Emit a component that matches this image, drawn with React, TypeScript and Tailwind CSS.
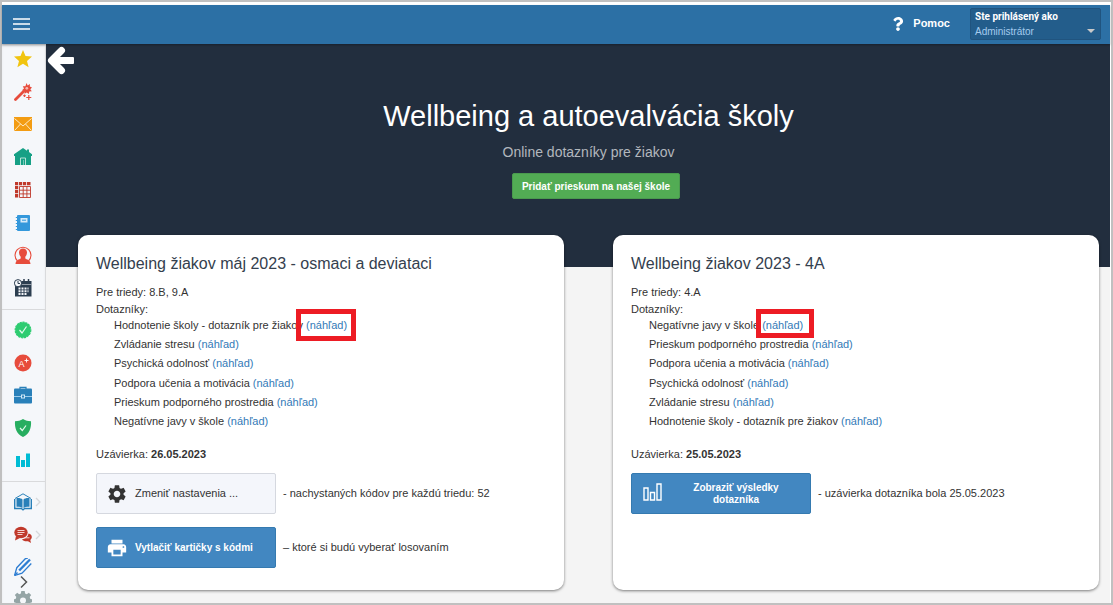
import { ReactNode } from 'react';
import clsx from 'clsx';
import { FaQuestion } from 'react-icons/fa';
import { MdPrint, MdSettings } from 'react-icons/md';

interface ISurvey {
    title: string;
    classes: string;
    deadline: string;
    forms: string[];
    markClass: string;
}

const surveys: ISurvey[] = [
    {
        title: 'Wellbeing žiakov máj 2023 - osmaci a deviataci',
        classes: '8.B, 9.A',
        deadline: '26.05.2023',
        markClass: '-left-2.5 w-[60px] h-8',
        forms: [
            'Hodnotenie školy - dotazník pre žiakov',
            'Zvládanie stresu',
            'Psychická odolnosť',
            'Podpora učenia a motivácia',
            'Prieskum podporného prostredia',
            'Negatívne javy v škole',
        ],
    },
    {
        title: 'Wellbeing žiakov 2023 - 4A',
        classes: '4.A',
        deadline: '25.05.2023',
        markClass: '-left-1.5 w-[58px] h-[29px]',
        forms: [
            'Negatívne javy v škole',
            'Prieskum podporného prostredia',
            'Podpora učenia a motivácia',
            'Psychická odolnosť',
            'Zvládanie stresu',
            'Hodnotenie školy - dotazník pre žiakov',
        ],
    },
];

const Icon = ({ children }: { children: ReactNode }) => (
    <svg viewBox="0 0 18 18" className="size-[18px] shrink-0" fill="none" aria-hidden="true">
        {children}
    </svg>
);

const MenuItem = ({ label, arrow, children }: { label: string; arrow?: boolean; children: ReactNode }) => (
    <a href="#" aria-label={label} className="relative flex h-[18px] pl-3">
        <Icon>{children}</Icon>
        {arrow && (
            <svg viewBox="0 0 6 10" className="absolute right-1 top-1 h-2.5 w-1.5" fill="none" aria-hidden="true">
                <path d="M1 1l4 4-4 4" stroke="#d5d8db" strokeWidth="1.3" />
            </svg>
        )}
    </a>
);

const Sidebar = () => (
    <nav className="relative w-11 shrink-0 overflow-hidden border-r border-[#d9dadc] bg-[#f5f7fa] shadow-[inset_0_3px_3px_-1px_rgba(0,0,0,0.12)]">
        <div className="flex h-[266px] flex-col justify-between border-b border-[#d9dadc] pb-3 pt-1.5">
            <MenuItem label="Obľúbené">
                <path fill="#f1c40f" d="M9 0l2.500 6.100 6.500.5-5 4.300 1.600 6.400L9 13.800l-5.600 3.500L5 10.900 0 6.600l6.500-.5z" />
            </MenuItem>
            <MenuItem label="Sprievodca">
                <path d="M1.500 16.500L9.500 8.500" stroke="#e74c3c" strokeWidth="2.800" strokeLinecap="round" />
                <path fill="#e74c3c" d="M12.500 0l1.200 2.400L16 1l-.2 2.600 2.200.8-1.700 1.800 1.500 2-2.500.2-.5 2.500-2-1.500-2.200 1.300-.1-2.600L8 7.200l2-1.700-1.200-2.300 2.600.1z" />
                <circle cx="12.800" cy="5.300" r="1.400" fill="#f7b7b0" />
                <path d="M14.800 12v5M12.300 14.500h5M10.500 11.500v2.400M9.300 12.700h2.400" stroke="#e74c3c" strokeWidth="1.200" />
            </MenuItem>
            <MenuItem label="Správy">
                <path fill="#f39c12" d="M0 2h18v14H0z" />
                <path d="M.5 3.500L9 11l8.500-7.500M.5 15.500l6-6.500M17.500 15.500l-6-6.500" stroke="#fde9c6" />
            </MenuItem>
            <MenuItem label="Škola">
                <path fill="#16a085" d="M9 0L0 6.300V8h1v9h16V8h1V6.300L15 4V1.500h-2v1.300z" />
                <path d="M6.500 17V10h5v7" stroke="#b5e3d6" />
                <path d="M9.500 12v5" stroke="#b5e3d6" strokeOpacity=".6" />
            </MenuItem>
            <MenuItem label="Rozvrh">
                <path fill="#c0392b" d="M1 1h3.200v3.200H1zM5 1h3.200v3.200H5zM9 1h3.200v3.200H9zM13 1h3.500v3.200H13zM1 5h3.200v3.200H1zM1 9h3.200v3.200H1zM1 13h3.200v3.500H1z" />
                <path d="M5.500 5.500h11v11h-11zM9.200 5.500v11M12.900 5.500v11M5.500 9.200h11M5.500 12.900h11" stroke="#c0392b" strokeWidth=".9" />
            </MenuItem>
            <MenuItem label="Triedna kniha">
                <rect x="3" y="1" width="13" height="16" rx="1" fill="#3498db" />
                <path d="M1.800 3.500h2m-2 3h2m-2 3h2m-2 3h2m-2 3h2" stroke="#3498db" />
                <path fill="#d7ebf8" d="M6.500 4h7v4.500h-7z" />
                <path d="M8 6.200h4" stroke="#3498db" />
            </MenuItem>
            <MenuItem label="Používatelia">
                <path d="M3.500 15A8 8 0 1 1 14.500 15" stroke="#e74c3c" strokeWidth="1.100" />
                <path fill="#e74c3c" d="M9 2.500c2.800 0 4.100 1.900 4 4.300-.1 1.700-.8 3-1.700 4v1.600c1 1 5.200 1.300 5.200 5.600h-15c0-4.300 4.200-4.600 5.200-5.600v-1.600c-.9-1-1.600-2.300-1.700-4-.1-2.400 1.200-4.300 4-4.300z" />
            </MenuItem>
            <MenuItem label="Kalendár">
                <path fill="#2c3e50" d="M1 2h16.500v15.500H1z" />
                <path d="M10 0v3M14.500 0v3" stroke="#2c3e50" strokeWidth="1.500" />
                <path d="M8 5.500h9.500" stroke="#aeb6bf" strokeWidth=".8" />
                <circle cx="4" cy="4.200" r="3.600" fill="#f5f7fa" stroke="#2c3e50" />
                <path d="M4 2v2.500h2" stroke="#2c3e50" />
                <path fill="#f5f7fa" d="M4.500 8.500h2v2h-2zM7.500 8.500h2v2h-2zM10.500 8.500h2v2h-2zM13.500 8.500h1v2h-1zM4.500 11.300h2v2h-2zM7.500 11.300h2v2h-2zM10.500 11.300h2v2h-2zM13.500 11.300h1v2h-1zM4.500 14h2v2h-2zM7.500 14h2v2h-2zM10.500 14h2v2h-2z" />
            </MenuItem>
        </div>
        <div className="flex h-[172px] flex-col justify-between border-b border-[#d9dadc] pb-3 pt-[11px]">
            <MenuItem label="Dochádzka">
                <circle cx="9" cy="9" r="7.800" fill="#2ecc71" stroke="#2ecc71" strokeWidth="1.200" strokeDasharray="2.200 .8" />
                <path d="M5.500 9l2.500 3 4.500-6.500" stroke="#e4faed" strokeWidth="1.200" />
            </MenuItem>
            <MenuItem label="Známky">
                <circle cx="9" cy="9" r="8.500" fill="#e74c3c" />
                <text x="4.500" y="13" fontSize="9" fill="#fff" fontFamily="Liberation Sans, sans-serif">A</text>
                <path d="M10.500 6.500h4M12.500 4.500v4" stroke="#fff" strokeWidth=".9" />
            </MenuItem>
            <MenuItem label="Agenda">
                <path d="M6 3V1.300h6V3" stroke="#2980b9" strokeWidth="1.200" />
                <rect y="2.500" width="18" height="15" rx="1" fill="#2980b9" />
                <path d="M0 10.500h18" stroke="#9ccbea" />
                <rect x="7.500" y="9" width="3" height="3" fill="#2980b9" stroke="#d0e7f6" />
            </MenuItem>
            <MenuItem label="Bezpečnosť">
                <path fill="#27ae60" d="M9 0c2.500 1.500 5 2.200 8 2.300C17.500 9 15.500 15 9 18 2.500 15 .5 9 1 2.300 4 2.200 6.500 1.500 9 0z" />
                <path d="M6 9l2.300 2.500 3.700-5" stroke="#e4faed" strokeWidth="1.200" />
            </MenuItem>
            <MenuItem label="Prieskumy">
                <path fill="#00bcd4" d="M2 5h4v11H2zM7 9h4v7H7zM12 2.500h4V16h-4z" />
            </MenuItem>
        </div>
        <div className="flex h-[127px] flex-col justify-between pt-[11px]">
            <MenuItem label="Knižnica" arrow>
                <path d="M1 5.500L9 .8l8 4.700" stroke="#2980b9" />
                <path fill="#2980b9" d="M2.500 5c2.700-.2 5 .3 6 1.500V15c-1.300-1-3.500-1.300-6-1.200zM15.500 5c-2.700-.2-5 .3-6 1.500V15c1.300-1 3.500-1.300 6-1.200z" />
                <path d="M.7 6v9.500h6.600L9 16.800l1.700-1.300h6.600V6" stroke="#2980b9" strokeWidth="1.400" />
            </MenuItem>
            <MenuItem label="Komunikácia" arrow>
                <ellipse cx="7" cy="6.500" rx="6.700" ry="5.700" fill="#c0392b" />
                <path fill="#c0392b" d="M2 10l-1 4.500L6 12z" />
                <path d="M3.500 4.500h7M3.500 6.500h7M3.500 8.500h5" stroke="#fbe3e0" strokeWidth=".9" />
                <path fill="#c0392b" d="M14.500 7.500c2.200.6 3.300 1.900 3.300 3.500 0 1.200-.5 2.100-1.500 2.900l.7 3.100-3-1.700c-3 .3-5-.5-6-2.100 3.500-.3 6-2.500 6.500-5.700z" />
                <path d="M11 11.800h4.500" stroke="#fbe3e0" strokeWidth=".9" />
            </MenuItem>
            <MenuItem label="Úlohy">
                <path d="M.5 17.500L2.800 9.700 11 1c.7-.7 1.800-.8 2.800-.5M.5 17.500l7.500-2.300L17.300 5.500" stroke="#2d7dd2" strokeWidth="1.300" />
                <path d="M5.200 12.500L16 1.500" stroke="#2d7dd2" strokeWidth="2.400" />
                <path d="M.5 17.500l3-3" stroke="#2d7dd2" strokeWidth="1.500" />
            </MenuItem>
            <MenuItem label="Nastavenia">
                <path fill="#95a5a6" fillRule="evenodd" d="M7.300 0h3.400l.4 2.500 1.700.7 2-1.500 2.400 2.400-1.500 2 .7 1.800 1.600.4v3l-1.600.4-.7 1.800 1.500 2-2.400 2.400-2-1.500-1.700.7-.4 2.500H7.300l-.4-2.500-1.700-.7-2 1.500L.8 15.500l1.500-2-.7-1.800L0 11.300v-3l1.600-.4.7-1.800-1.500-2 2.400-2.400 2 1.500 1.700-.7zM9 6.500a3 3 0 1 0 0 6 3 3 0 0 0 0-6z" />
            </MenuItem>
        </div>
        <button type="button" aria-label="Rozbaliť menu" className="absolute bottom-3.5 left-[18px]">
            <svg viewBox="0 0 8 14" className="block h-3.5 w-2" fill="none" aria-hidden="true">
                <path d="M1 1.500l5.500 5.500L1 12.500" stroke="#555" strokeWidth="1.500" />
            </svg>
        </button>
    </nav>
);

const Header = () => (
    <header className="z-10 flex h-[39px] shrink-0 items-center bg-[#2c70a5] pb-0.5 pl-[11px] pr-[9px] text-[11px] text-white shadow-[0_1px_2px_rgba(0,0,0,0.3)]">
        <button type="button" aria-label="Menu">
            <svg viewBox="0 0 17 12" className="h-3 w-[17px]" fill="none" aria-hidden="true">
                <path d="M0 1h17M0 6h17M0 11h17" stroke="#fff" strokeWidth="1.500" />
            </svg>
        </button>
        <a href="#" className="ml-auto flex items-center gap-2 font-bold">
            <FaQuestion className="size-3.5" />
            Pomoc
        </a>
        <button type="button" className="relative ml-5 h-8 w-[131px] rounded-xs border border-[#20547f] bg-[#235d8b] pl-1 text-left text-[10px] leading-[15px]">
            <span className="block font-['Roboto',sans-serif] font-bold">Ste prihlásený ako</span>
            <span className="block text-[#a5cbee]">Administrátor</span>
            <svg viewBox="0 0 8 4" className="absolute bottom-1.5 right-[5px] h-1 w-2" aria-hidden="true">
                <path d="M0 0h8L4 4z" fill="#c9c9c9" />
            </svg>
        </button>
    </header>
);

const SurveyCard = ({ survey, children }: { survey: ISurvey; children: ReactNode }) => (
    <article className="rounded-[10px] bg-white px-[18px] pb-[22px] pt-[19px] shadow-[0_1px_3px_rgba(0,0,0,0.5)]">
        <h2 className="text-base leading-5 text-[#34404e]">{survey.title}</h2>
        <p className="mt-2.5 leading-[17px]">Pre triedy: {survey.classes}</p>
        <p className="leading-[17px]">Dotazníky:</p>
        <ul className="flex h-[111px] flex-col justify-between pl-[18px] leading-[15px]">
            {survey.forms.map((form, index) => (
                <li key={form} className="whitespace-nowrap">
                    {form}{' '}
                    <a href="#" className="relative text-[#337ab7]">
                        (náhľad)
                        {index === 0 && (
                            <span className={clsx('absolute -top-2.5 border-[5px] border-[#ed1c24]', survey.markClass)} />
                        )}
                    </a>
                </li>
            ))}
        </ul>
        <p className="mt-[17px] leading-[17px]">
            Uzávierka: <strong>{survey.deadline}</strong>
        </p>
        <div className="mt-2.5 flex flex-col gap-[13px]">{children}</div>
    </article>
);

const App = () => {
    return (
        <div className="flex h-screen flex-col border-2 border-[#c0c0c0] bg-white pr-px pt-[3px] font-['Liberation_Sans',Arial,sans-serif] text-[11px] text-[#333]">
            <Header />
            <div className="flex min-h-0 flex-1">
                <Sidebar />
                <main className="min-w-0 flex-1 overflow-hidden bg-[#f4f4f4]">
                    <section className="relative h-[223px] bg-[#222e3e] pl-8 pr-[11px] pt-[54px] text-center">
                        <a href="#" aria-label="Späť" className="absolute left-px top-0.5">
                            <svg viewBox="0 0 27 29" className="h-[29px] w-[27px]" fill="none" aria-hidden="true">
                                <path d="M14.500 4.500l-10 10 10 10" stroke="#fff" strokeWidth="7" strokeLinecap="round" strokeLinejoin="round" />
                                <path d="M5 14.500h20" stroke="#fff" strokeWidth="7" />
                                <path d="M24 12h2v5h-2z" stroke="#fff" strokeWidth="2" strokeLinejoin="round" />
                            </svg>
                        </a>
                        <h1 className="text-[29px] leading-9 text-white">Wellbeing a autoevalvácia školy</h1>
                        <p className="mt-2 text-sm leading-5 text-[#b2b7bd]">Online dotazníky pre žiakov</p>
                        <button type="button" className="ml-[15px] mt-[11px] h-[26px] rounded-xs border border-[#4a9a4e] bg-[#52ac54] px-[9px] text-[10px] font-bold text-white">
                            Pridať prieskum na našej škole
                        </button>
                    </section>
                    <section className="relative -mt-8 grid grid-cols-2 gap-[49px] pl-8 pr-[11px]">
                        <SurveyCard survey={surveys[0]}>
                            <div className="flex items-center gap-[7px]">
                                <button type="button" className="flex h-[41px] w-[180px] items-center gap-[7px] rounded-xs border border-[#d5d8df] bg-[#f4f6fb] pl-[9px]">
                                    <MdSettings className="size-[22px]" />
                                    Zmeniť nastavenia ...
                                </button>
                                <span>- nachystaných kódov pre každú triedu: 52</span>
                            </div>
                            <div className="flex items-center gap-[7px]">
                                <button type="button" className="flex h-[41px] w-[180px] items-center gap-[7px] rounded-xs border border-[#357ab0] bg-[#4287c1] pl-[9px] text-[10px] font-bold text-white">
                                    <MdPrint className="size-[22px]" />
                                    Vytlačiť kartičky s kódmi
                                </button>
                                <span>– ktoré si budú vyberať losovaním</span>
                            </div>
                        </SurveyCard>
                        <SurveyCard survey={surveys[1]}>
                            <div className="flex items-center gap-[7px]">
                                <button type="button" className="flex h-[41px] w-[180px] items-center rounded-xs border border-[#357ab0] bg-[#4287c1] pl-[11px] text-[10px] font-bold leading-3 text-white">
                                    <svg viewBox="0 0 19 18" className="mb-1 h-[18px] w-[19px] shrink-0" fill="none" aria-hidden="true">
                                        <path d="M1 5h4v12H1zM7.500 9.500h4V17h-4zM14 1h4v16h-4z" stroke="#fff" strokeWidth="1.400" />
                                    </svg>
                                    <span className="flex-1 px-5">Zobraziť výsledky dotazníka</span>
                                </button>
                                <span>- uzávierka dotazníka bola 25.05.2023</span>
                            </div>
                        </SurveyCard>
                    </section>
                </main>
            </div>
        </div>
    );
};

export default App;
